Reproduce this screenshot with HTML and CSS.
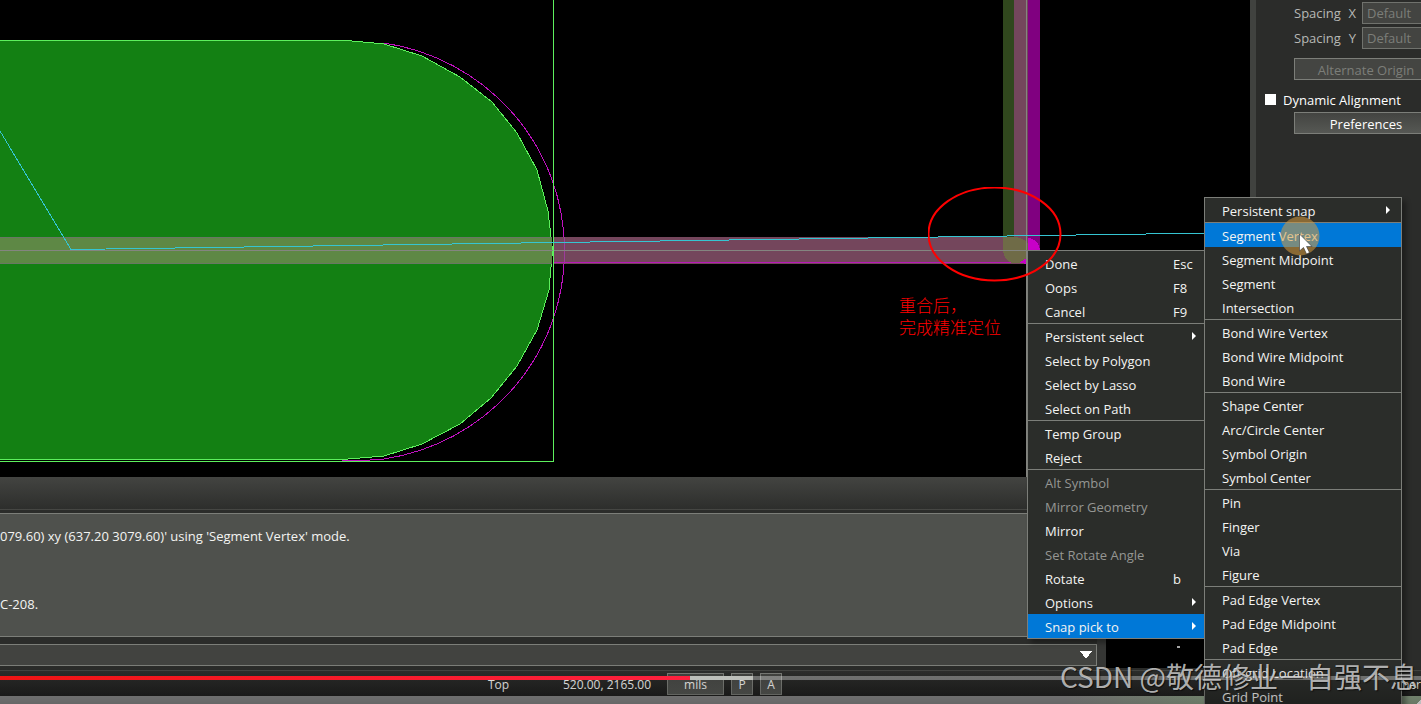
FILE: index.html
```
<!DOCTYPE html>
<html lang="en">
<head>
<meta charset="utf-8">
<title>PCB Editor</title>
<link rel="stylesheet" href="styles.css">
</head>
<body>
<div class="app">
  <div class="workspace">
    <main class="main">
      <div class="canvas">
        <svg class="drawing" width="1250" height="477" shape-rendering="crispEdges" aria-hidden="true">
          <path d="M342 460.500H360C365 460.500 385 459 384 459A212 210 0 0 0 564.500 250A212 210 0 0 0 384 43" fill="none" stroke="#c011c0"/>
          <path d="M0 40.500H307L347 40.500L384 44L422 56L460 77L492 102L517 133L537 170L548 211L552.500 250L549 290L537 330L517 366L491 398L460 424L422 444L384 456L342 459.500H0" fill="#138013" stroke="#5df05d"/>
          <rect x="1003" y="0" width="11" height="250" fill="#30471d"/>
          <rect x="1014" y="0" width="14" height="250" fill="#74465c"/>
          <rect x="1028" y="0" width="12" height="250" fill="#800080"/>
          <rect x="0" y="237" width="552" height="27" fill="#5e8845"/>
          <path d="M0 237.500H552M0 263.500H552" stroke="#687863"/>
          <rect x="554" y="237" width="474" height="27" fill="#74465c"/>
          <path d="M564.500 237V264" stroke="#9c3c9c"/>
          <path d="M554 262.500H1028" stroke="#b818b8"/>
          <path d="M1003 237H1028V258L1022 263H1012Q1003 260 1003 248Z" fill="#6f6b47"/>
          <path d="M1014 237H1028V243Q1021 237 1014 237Z" fill="#74465c"/>
          <path d="M1019 263L1028 257V264ZM1028 238Q1039 239 1040 251H1028Z" fill="#c800c8"/>
          <path d="M0 250.500H1250M1026.500 0V477" stroke="#848580" fill="none"/>
          <path d="M553.500 0V461.500M0 461.500H554" stroke="#5df05d" fill="none"/>
          <path d="M0 131L71 249.500L1250 232.500" stroke="#35c5d2" fill="none"/>
        </svg>
        <p class="note" lang="zh">重合后，<br>完成精准定位</p>
      </div>
      <div class="dock">
        <section class="console">
          <div class="console-head"></div>
          <div class="log">
            <p>079.60) xy (637.20 3079.60)' using 'Segment Vertex' mode.</p>
            <p class="log-last">C-208.</p>
          </div>
          <select class="command" aria-label="Command"><option></option></select>
        </section>
        <div class="world"><span class="world-mark"></span></div>
      </div>
    </main>
    <aside class="side">
      <div class="field"><label for="sx">Spacing<span>X</span></label><input id="sx" placeholder="Default" disabled></div>
      <div class="field"><label for="sy">Spacing<span>Y</span></label><input id="sy" placeholder="Default" disabled></div>
      <button class="side-button alternate" disabled>Alternate Origin</button>
      <label class="check"><input type="checkbox">Dynamic Alignment</label>
      <button class="side-button">Preferences</button>
    </aside>
  </div>
  <footer class="status">
    <span class="layer">Top</span>
    <span class="coords">520.00, 2165.00</span>
    <button class="units">mils</button>
    <button class="mode">P</button>
    <button class="mode">A</button>
    <span class="tail">mer</span>
  </footer>
  <div class="strip"></div>
</div>

<div class="menu context" role="menu">
  <div class="group">
    <button>Done<kbd>Esc</kbd></button>
    <button>Oops<kbd>F8</kbd></button>
    <button>Cancel<kbd>F9</kbd></button>
  </div>
  <div class="group">
    <button class="more">Persistent select</button>
    <button>Select by Polygon</button>
    <button>Select by Lasso</button>
    <button>Select on Path</button>
  </div>
  <div class="group">
    <button>Temp Group</button>
    <button>Reject</button>
  </div>
  <div class="group">
    <button disabled>Alt Symbol</button>
    <button disabled>Mirror Geometry</button>
    <button>Mirror</button>
    <button disabled>Set Rotate Angle</button>
    <button>Rotate<kbd>b</kbd></button>
    <button class="more">Options</button>
    <button class="more active">Snap pick to</button>
  </div>
</div>

<div class="menu snap" role="menu">
  <div class="group">
    <button class="more">Persistent snap</button>
  </div>
  <div class="group">
    <button class="active">Segment Vertex</button>
    <button>Segment Midpoint</button>
    <button>Segment</button>
    <button>Intersection</button>
  </div>
  <div class="group">
    <button>Bond Wire Vertex</button>
    <button>Bond Wire Midpoint</button>
    <button>Bond Wire</button>
  </div>
  <div class="group">
    <button>Shape Center</button>
    <button>Arc/Circle Center</button>
    <button>Symbol Origin</button>
    <button>Symbol Center</button>
  </div>
  <div class="group">
    <button>Pin</button>
    <button>Finger</button>
    <button>Via</button>
    <button>Figure</button>
  </div>
  <div class="group">
    <button>Pad Edge Vertex</button>
    <button>Pad Edge Midpoint</button>
    <button>Pad Edge</button>
  </div>
  <div class="group">
    <button>Off-grid Location</button>
    <button>Grid Point</button>
  </div>
</div>

<svg class="highlight" width="134" height="95" aria-hidden="true"><ellipse cx="66.500" cy="47" rx="66" ry="46.500" fill="none" stroke="#f00" stroke-width="2"/></svg>
<svg class="pointer" width="40" height="40" aria-hidden="true">
  <circle cx="20" cy="20" r="19.500" fill="#d79a3c" fill-opacity=".55"/>
  <path d="M19.500 18V35L23.500 31.500L26.500 38L29.500 36.500L26.500 30.500H32Z" fill="#fff" stroke="#333" stroke-width=".6"/>
</svg>
<div class="shade"></div>
<div class="progress"><div class="buffered"></div><div class="played"></div></div>
<div class="watermark" lang="zh">CSDN @敬德修业－自强不息</div>
</body>
</html>
```
FILE: styles.css
```
* { box-sizing: border-box; }
body {
  margin: 0;
  height: 100vh;
  overflow: hidden;
  position: relative;
  background: #000;
  color: #f4f4f2;
  font: 13px/24px "Open Sans", "Noto Sans", sans-serif;
}
p { margin: 0; }
button, input, select { font: inherit; color: inherit; border-radius: 0; margin: 0; }
.app { display: flex; flex-direction: column; height: 100vh; }
.workspace { flex: 1; display: flex; min-height: 0; }
.main { flex: 1; min-width: 0; display: flex; flex-direction: column; }
.canvas { flex: 1; min-height: 0; position: relative; overflow: hidden; background: #000; }
.drawing { display: block; }
.note {
  position: absolute;
  left: 899px;
  top: 294px;
  color: #f00;
  font: 300 17px/22px "Noto Sans CJK SC", sans-serif;
}
.dock { display: flex; height: 193px; background: #2b2c2a; }
.console { flex: 1; display: flex; flex-direction: column; border-right: 9px solid #353634; }
.console-head { height: 33px; background: linear-gradient(#434441, #2d2e2c); border-bottom: 1px solid #454643; margin-bottom: 3px; }
.log { height: 124px; padding-top: 10px; background: #4f514d; border: solid #7c7e79; border-width: 1px 0; white-space: nowrap; }
.log-last { margin-top: 44px; }
.command {
  appearance: none;
  height: 22px;
  margin-top: 7px;
  border: 1px solid #7c7e79;
  border-left: 0;
  background-color: #424340;
  background-image: linear-gradient(to top right, transparent 50%, #fff 50%), linear-gradient(to top left, transparent 50%, #fff 50%);
  background-size: 6px 8px;
  background-position: right 10px center, right 4px center;
  background-repeat: no-repeat;
}
.world { width: 144px; background: #000; border-bottom: 2px solid #2b2c2a; padding: 169px 0 0 71px; }
.world-mark { display: block; width: 3px; height: 2px; background: #aaa; }
.side { width: 171px; padding: 2px 0 0 9px; border-left: 6px solid #40423f; background: #2b2c2a; overflow: hidden; }
.field { display: flex; align-items: center; height: 22px; margin: 0 0 3px 29px; color: #b7b8b5; }
.field label { display: flex; flex: none; justify-content: space-between; width: 62px; margin-right: 6px; }
.field input { flex: none; width: 80px; height: 22px; padding: 0 4px; border: 1px solid #70726d; background: #434441; }
.field input::placeholder { color: #7c7e79; opacity: 1; }
.side-button { display: block; width: 144px; height: 22px; margin-left: 29px; padding: 1px 0 0; line-height: 20px; border: 1px solid #7c7e79; background: linear-gradient(#434441, #565854); color: #fff; }
.side-button:disabled { color: #7c7e79; background: #444542; }
.alternate { margin-top: 9px; }
.check { display: flex; align-items: center; gap: 7px; height: 21px; margin: 9px 0 2px; color: #fff; }
.check input { appearance: none; width: 11px; height: 11px; background: #fff; }
.status { display: flex; align-items: center; height: 26px; padding-left: 488px; border-top: 1px solid #454643; background: linear-gradient(#2d2e2c, #212120); font-size: 12px; white-space: nowrap; }
.status span { padding-top: 2px; }
.layer { width: 75px; }
.coords { width: 104px; }
.status button { height: 22px; padding: 1px 0 0; border: 1px solid #7c7e79; background: linear-gradient(#444542, #565854); line-height: 20px; }
.status .units { width: 57px; margin-right: 7px; }
.status .mode { width: 22px; margin-right: 7px; }
.tail { margin-left: auto; }
.strip { height: 8px; background: linear-gradient(135deg, transparent 50%, #fff 50%) right bottom / 5px 5px no-repeat, linear-gradient(90deg, #8c8c8c 75%, #8fa389 85%); }
.menu { position: absolute; border: 1px solid #7c7e79; background: #2b2d2a; box-shadow: 4px 4px 5px #0005; }
.context { left: 1027px; top: 250px; width: 178px; }
.snap { left: 1204px; top: 197px; width: 198px; }
.group + .group { border-top: 1px solid #7c7e79; }
.menu button {
  position: relative;
  display: flex;
  width: 100%;
  height: 24px;
  padding: 1px 0 0 17px;
  border: 0;
  background: none;
  line-height: 24px;
  text-align: left;
  white-space: nowrap;
}
.menu button:disabled { color: #959693; }
.menu .active { background: #0078d7; }
.menu kbd { position: absolute; left: 145px; font: inherit; }
.more::after {
  content: "";
  position: absolute;
  right: 8px;
  top: 8px;
  border: solid transparent;
  border-width: 4px 0 4px 4px;
  border-left-color: #fff;
}
.snap .more::after { right: 11px; }
.highlight { position: absolute; left: 928px; top: 187px; }
.pointer { position: absolute; left: 1280px; top: 216px; }
.shade { position: absolute; left: 0; right: 0; bottom: 0; height: 40px; background: linear-gradient(transparent, #0004); }
.progress { position: absolute; left: 0; right: 0; top: 676px; height: 4px; background: #ffffff55; }
.progress div { position: absolute; left: 0; height: 4px; }
.buffered { width: 53%; background: #bdbfba; }
.played { width: 690px; background: linear-gradient(90deg, #ef1414, #ff213f); }
.watermark { position: absolute; right: 3px; top: 656px; color: #d8d8d8cc; font: 28px/40px "Noto Sans CJK SC", sans-serif; white-space: nowrap; text-shadow: 1px 1px 1px #0009; }
```
